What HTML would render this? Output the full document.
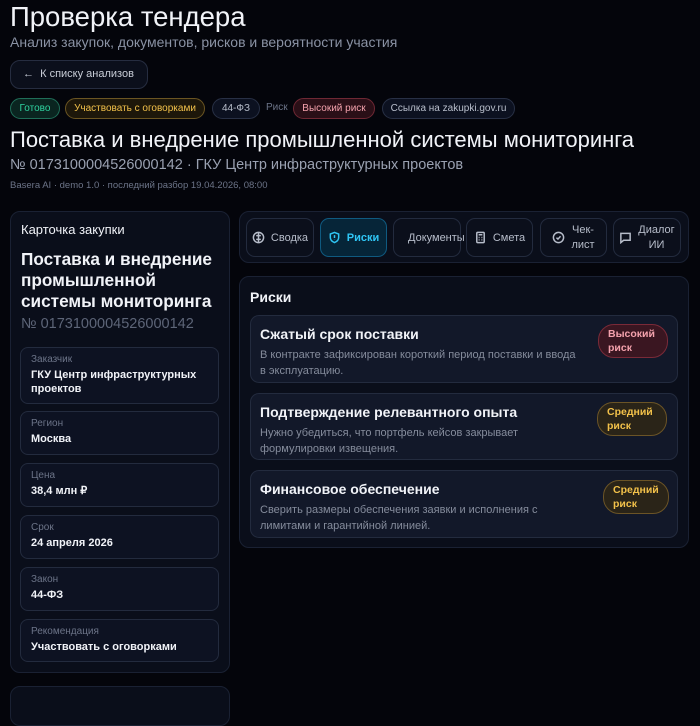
<!DOCTYPE html>
<html><head><meta charset="utf-8"><style>
*{box-sizing:border-box;margin:0;padding:0}
body{width:700px;height:700px;overflow:hidden;background:#04050b;font-family:"Liberation Sans",sans-serif;color:#f1f3f8;position:relative}
.a{position:absolute;white-space:nowrap}
.pill{position:absolute;height:21px;border-radius:11px;font-size:10px;line-height:19px;text-align:center;border:1px solid;white-space:nowrap}
.card{position:absolute;background:#0a0e1a;border:1px solid #1a2133;border-radius:10px}
.f{position:absolute;left:20px;width:199px;background:#0d1222;border:1px solid #232b3e;border-radius:8px;padding:6px 10px}
.f .l{font-size:10px;color:#6c7488}
.f .v{font-size:11px;font-weight:bold;color:#f1f3f8;margin-top:3px;line-height:14px}
.tab{position:absolute;top:218px;height:39px;border:1px solid #232b3e;border-radius:9px;background:#0b0f1b;font-size:11px;color:#b7bdca;display:flex;align-items:center;justify-content:center;gap:6px}
.tab svg{width:13px;height:13px;fill:none;stroke:#b7bdca;stroke-width:1.6}
.ri{position:absolute;left:250px;width:428px;background:#121829;border:1px solid #232b3e;border-radius:9px}
.ri .t{position:absolute;left:9px;top:10px;font-size:14px;font-weight:bold;color:#f1f3f8}
.ri .d{position:absolute;left:9px;top:31px;font-size:11px;line-height:16px;color:#858c9c;width:322px;white-space:normal}
.rb{position:absolute;border-radius:16px;font-size:10.5px;font-weight:bold;line-height:14px;padding:2px 9px 2px 9px;width:70px}
</style></head><body>
<div class="a" style="left:10px;top:1px;font-size:27.5px">Проверка тендера</div>
<div class="a" style="left:10px;top:34px;font-size:14px;color:#8a92a4">Анализ закупок, документов, рисков и вероятности участия</div>
<div class="a" style="left:10px;top:60px;width:138px;height:29px;border:1px solid #262d40;border-radius:10px;background:#0b0f1b;font-size:11px;color:#c9ced8;line-height:27px;padding-left:12px">←&nbsp; К списку анализов</div>
<div class="pill" style="left:10px;top:98px;width:50px;color:#2fd3a0;border-color:#1f6e58;background:#0a2520">Готово</div>
<div class="pill" style="left:65px;top:98px;width:140px;color:#f2c14a;border-color:#6b5522;background:#1d170a">Участвовать с оговорками</div>
<div class="pill" style="left:212px;top:98px;width:48px;color:#b9bfcc;border-color:#283045;background:#0c1120">44-ФЗ</div>
<div class="a" style="left:266px;top:102px;font-size:10px;color:#6c7488">Риск</div>
<div class="pill" style="left:293px;top:98px;width:82px;color:#f4a2ad;border-color:#6f2834;background:#2a0f17">Высокий риск</div>
<div class="pill" style="left:382px;top:98px;width:133px;color:#b9bfcc;border-color:#283045;background:#0c1120">Ссылка на zakupki.gov.ru</div>
<div class="a" style="left:10px;top:127px;font-size:22px;font-weight:500">Поставка и внедрение промышленной системы мониторинга</div>
<div class="a" style="left:10px;top:157px;font-size:14.5px;color:#9aa1b1">№ 0173100004526000142 · ГКУ Центр инфраструктурных проектов</div>
<div class="a" style="left:10px;top:180px;font-size:9.5px;color:#6c7488">Basera AI · demo 1.0 · последний разбор 19.04.2026, 08:00</div>

<div class="card" style="left:10px;top:211px;width:220px;height:462px"></div>
<div class="card" style="left:10px;top:686px;width:220px;height:40px"></div>
<div class="a" style="left:21px;top:222px;font-size:13px">Карточка закупки</div>
<div class="a" style="left:21px;top:249px;font-size:17.2px;font-weight:bold;line-height:21px">Поставка и внедрение<br>промышленной<br>системы мониторинга</div>
<div class="a" style="left:21px;top:316px;font-size:14.5px;color:#5d6578">№ 0173100004526000142</div>
<div class="f" style="top:347px;height:57px"><div class="l">Заказчик</div><div class="v">ГКУ Центр инфраструктурных<br>проектов</div></div>
<div class="f" style="top:411px;height:44px"><div class="l">Регион</div><div class="v">Москва</div></div>
<div class="f" style="top:463px;height:44px"><div class="l">Цена</div><div class="v">38,4 млн ₽</div></div>
<div class="f" style="top:515px;height:44px"><div class="l">Срок</div><div class="v">24 апреля 2026</div></div>
<div class="f" style="top:567px;height:44px"><div class="l">Закон</div><div class="v">44-ФЗ</div></div>
<div class="f" style="top:619px;height:43px"><div class="l">Рекомендация</div><div class="v">Участвовать с оговорками</div></div>

<div class="card" style="left:239px;top:211px;width:450px;height:52px"></div>
<div class="tab" style="left:246px;width:68px"><svg viewBox="0 0 14 14"><circle cx="7" cy="7" r="5.5"/><path d="M7 2v10M4.5 5h5M4.5 9h5"/></svg>Сводка</div>
<div class="tab" style="left:320px;width:67px;background:#062538;border-color:#0f5a80;color:#2fc6f5;font-weight:bold"><svg viewBox="0 0 14 14" style="stroke:#2fc6f5"><path d="M7 1.5l4.5 1.8v3.5c0 2.8-2 4.6-4.5 5.7C4.5 11.4 2.5 9.6 2.5 6.8V3.3z"/><path d="M7 4.5v3M7 9.3v.3"/></svg>Риски</div>
<div class="tab" style="left:393px;width:68px;justify-content:flex-start;padding-left:8px;overflow:visible"><svg viewBox="0 0 14 14"><path d="M3 1.5h5.5l2.5 2.5v8.5H3z"/><path d="M5 7h4M5 9.5h4"/></svg>Документы</div>
<div class="tab" style="left:466px;width:67px"><svg viewBox="0 0 14 14"><rect x="3" y="1.5" width="8" height="11" rx="1"/><path d="M5 4h4M5 7h1M8 7h1M5 9.5h1M8 9.5h1"/></svg>Смета</div>
<div class="tab" style="left:540px;width:67px"><svg viewBox="0 0 14 14"><circle cx="7" cy="7" r="5.5"/><path d="M4.8 7.2l1.6 1.5 2.8-3"/></svg><span style="text-align:center;line-height:15px">Чек-<br>лист</span></div>
<div class="tab" style="left:613px;width:68px"><svg viewBox="0 0 14 14"><path d="M2 2.5h10v7.5H5l-3 2.5z"/></svg><span style="text-align:center;line-height:15px">Диалог<br>ИИ</span></div>

<div class="card" style="left:239px;top:276px;width:450px;height:272px"></div>
<div class="a" style="left:250px;top:289px;font-size:14px;font-weight:bold">Риски</div>
<div class="ri" style="top:315px;height:68px"><div class="t">Сжатый срок поставки</div><div class="d">В контракте зафиксирован короткий период поставки и ввода в эксплуатацию.</div>
<div class="rb" style="left:347px;top:8px;color:#f4a2ad;border:1px solid #7a2a38;background:#3a1621">Высокий<br>риск</div></div>
<div class="ri" style="top:393px;height:67px"><div class="t">Подтверждение релевантного опыта</div><div class="d">Нужно убедиться, что портфель кейсов закрывает формулировки извещения.</div>
<div class="rb" style="left:346px;top:8px;color:#f2c14a;border:1px solid #6b5426;background:#2a2418">Средний<br>риск</div></div>
<div class="ri" style="top:470px;height:68px"><div class="t">Финансовое обеспечение</div><div class="d">Сверить размеры обеспечения заявки и исполнения с лимитами и гарантийной линией.</div>
<div class="rb" style="left:352px;top:9px;width:66px;color:#f2c14a;border:1px solid #6b5426;background:#2a2418">Средний<br>риск</div></div>
</body></html>
